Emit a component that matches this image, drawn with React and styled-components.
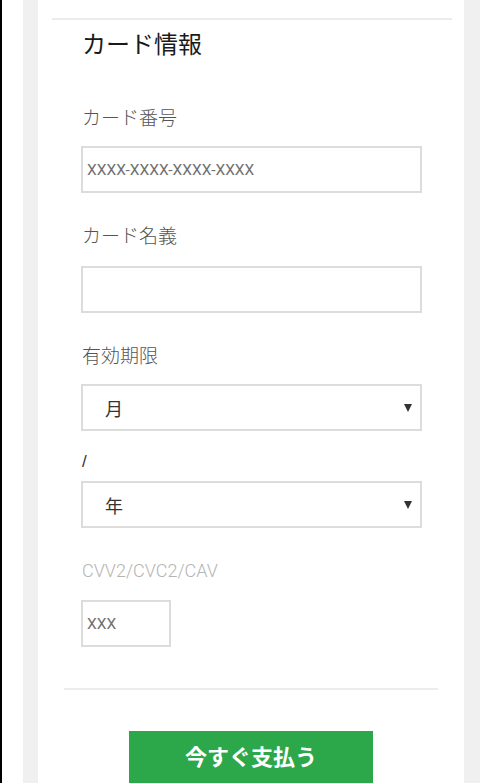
import React from "react";
import styled, { createGlobalStyle } from "styled-components";

const Global = createGlobalStyle`
  html, body { margin: 0; padding: 0; background: #fff; overflow: hidden; }
  body { font-family: "Liberation Sans", "Noto Sans CJK JP", sans-serif; }
  * { box-sizing: border-box; }
`;

const Page = styled.div`
  display: flex;
  width: 498px;
  height: 783px;
  background: #fff;
`;

const Edge = styled.div`
  width: ${(p) => p.w}px;
  flex: none;
  background: ${(p) => p.bg};
`;

const Card = styled.div`
  width: 426px;
  flex: none;
  background: #fff;
  display: flex;
  flex-direction: column;
`;

const Rule = styled.div`
  height: 2px;
  background: #ececec;
  margin: ${(p) => p.m};
`;

const Form = styled.form`
  display: flex;
  flex-direction: column;
  padding: 0 42px 0 43px;
`;

const Title = styled.h2`
  margin: 8px 0 0 1px;
  font-size: 24px;
  font-weight: 400;
  line-height: 30px;
  color: #1a1a1a;
  font-family: "Noto Sans CJK JP", sans-serif;
`;

const Label = styled.label`
  display: block;
  margin: ${(p) => p.mt}px 0 0 1px;
  font-size: ${(p) => (p.light ? 18 : 19)}px;
  font-weight: 300;
  line-height: 24px;
  color: ${(p) => (p.light ? "#b4b4b4" : "#555")};
  font-family: ${(p) =>
    p.light ? `Roboto, sans-serif` : `"Noto Sans CJK JP", sans-serif`};
`;

const Input = styled.input`
  display: block;
  margin-top: ${(p) => p.mt}px;
  width: ${(p) => p.w || 341}px;
  height: 47px;
  border: 2px solid #dcdcdc;
  border-radius: 0;
  background: #fff;
  padding: 0 4px;
  font-size: 15.5px;
  font-family: Roboto, "Noto Sans CJK JP", sans-serif;
  color: #333;
  outline: none;
  &::placeholder { color: #707070; }
`;

const SelectWrap = styled.div`
  position: relative;
  margin-top: ${(p) => p.mt}px;
  width: 341px;
  height: 47px;
`;

const Select = styled.select`
  appearance: none;
  -webkit-appearance: none;
  display: block;
  width: 100%;
  height: 100%;
  border: 2px solid #dcdcdc;
  border-radius: 0;
  background: #fff;
  padding: 0 0 0 22px;
  font-size: 18px;
  font-family: "Noto Sans CJK JP", sans-serif;
  color: #333;
  outline: none;
`;

const Arrow = styled.span`
  position: absolute;
  right: 10px;
  top: 50%;
  transform: translateY(-50%);
  width: 0;
  height: 0;
  border-left: 4px solid transparent;
  border-right: 4px solid transparent;
  border-top: 8px solid #333;
  pointer-events: none;
`;

const Slash = styled.div`
  margin: 21px 0 0 1px;
  font-size: 17px;
  line-height: 20px;
  color: #333;
`;

const ButtonRow = styled.div`
  display: flex;
  justify-content: center;
  margin-top: 41px;
`;

const PayButton = styled.button`
  width: 244px;
  height: 52px;
  border: none;
  border-radius: 0;
  background: #2ca84b;
  color: #fff;
  font-size: 22px;
  font-weight: 700;
  font-family: "Noto Sans CJK JP", sans-serif;
  padding: 0 0 4px;
`;

export default function App() {
  return (
    <>
      <Global />
      <Page>
        <Edge w={2} bg="#000" />
        <Edge w={21} bg="#fff" />
        <Edge w={15} bg="#f0f0f0" />
        <Card>
          <Rule m="18px 12px 0 14px" />
          <Form onSubmit={(e) => e.preventDefault()}>
            <Title>カード情報</Title>
            <Label mt={47}>カード番号</Label>
            <Input mt={17} placeholder="XXXX-XXXX-XXXX-XXXX" />
            <Label mt={30}>カード名義</Label>
            <Input mt={19} />
            <Label mt={30}>有効期限</Label>
            <SelectWrap mt={17}>
              <Select defaultValue="">
                <option value="">月</option>
              </Select>
              <Arrow />
            </SelectWrap>
            <Slash>/</Slash>
            <SelectWrap mt={9}>
              <Select defaultValue="">
                <option value="">年</option>
              </Select>
              <Arrow />
            </SelectWrap>
            <Label mt={31} light>
              CVV2/CVC2/CAV
            </Label>
            <Input mt={17} w={90} placeholder="XXX" />
          </Form>
          <Rule m="41px 26px 0 26px" />
          <ButtonRow>
            <PayButton type="button">今すぐ支払う</PayButton>
          </ButtonRow>
        </Card>
        <Edge w={16} bg="#f0f0f0" />
        <Edge w={18} bg="#fff" />
      </Page>
    </>
  );
}
